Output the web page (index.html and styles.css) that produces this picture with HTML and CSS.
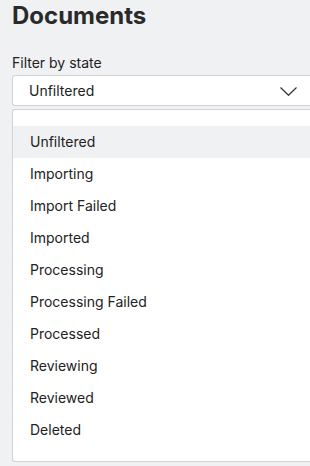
FILE: index.html
```html
<!DOCTYPE html>
<html>
<head>
<meta charset="utf-8">
<link rel="stylesheet" href="styles.css">
</head>
<body>
<div class="page">
  <h1 class="title">Documents</h1>
  <label class="label">Filter by state</label>
  <div class="select">
    <span class="select-value">Unfiltered</span>
    <svg class="chevron" width="17" height="9" viewBox="0 0 17 9"><path d="M0.5 0.5 L8.5 8.3 L16.5 0.5" fill="none" stroke="#333" stroke-width="1.2"/></svg>
  </div>
  <ul class="menu">
    <li class="item active">Unfiltered</li>
    <li class="item">Importing</li>
    <li class="item">Import Failed</li>
    <li class="item">Imported</li>
    <li class="item">Processing</li>
    <li class="item">Processing Failed</li>
    <li class="item">Processed</li>
    <li class="item">Reviewing</li>
    <li class="item">Reviewed</li>
    <li class="item">Deleted</li>
  </ul>
</div>
</body>
</html>
```
FILE: styles.css
```css
html, body {
  margin: 0;
  padding: 0;
  background: #f0f1f3;
  overflow: hidden;
}
body {
  font-family: Inter, "Noto Sans", sans-serif;
  color: #222;
}
.page {
  padding: 0 0 0 12px;
  width: 298px;
  overflow: hidden;
}
.title {
  margin: 0;
  padding-top: 1px;
  font-size: 24px;
  font-weight: 700;
  line-height: 30px;
  color: #2a2a2a;
}
.label {
  display: block;
  margin-top: 23px;
  font-size: 14px;
  line-height: 18px;
  color: #222;
}
.select {
  margin-top: 3px;
  background: #fff;
  border: 1px solid #cfd2d7;
  border-right: none;
  border-radius: 3px 0 0 3px;
  display: flex;
  align-items: center;
  justify-content: space-between;
  padding: 0 13px 0 16px;
  box-sizing: border-box;
  height: 31px;
  width: 298px;
}
.select-value {
  font-size: 14px;
}
.chevron {
  display: block;
  margin-top: 2px;
}
.menu {
  list-style: none;
  margin: 3px 0 0 0;
  padding: 16px 0 15px 0;
  background: #fff;
  border: 1px solid #cfd2d7;
  border-right: none;
  border-radius: 3px 0 0 3px;
  width: 297px;
}
.item {
  height: 32px;
  line-height: 32px;
  padding-left: 17px;
  font-size: 14px;
  color: #222;
}
.item.active {
  background: #f0f1f3;
}
```
